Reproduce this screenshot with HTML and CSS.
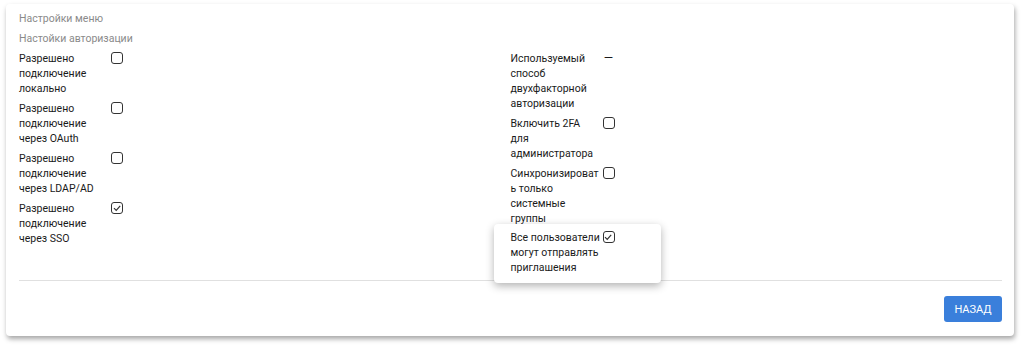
FILE: index.html
```html
<!DOCTYPE html>
<html lang="ru">
<head>
    <meta charset="UTF-8">
    <meta name="viewport" content="width=device-width, initial-scale=1.0">
    <title>Настройки авторизации</title>
    <link rel="stylesheet" href="styles.css">
</head>
<body>
    <div class="card">
        <div class="section-title">Настройки меню</div>
        <div class="section-title">Настойки авторизации</div>

        <div class="settings">
            <div class="column">
                <div class="item">
                    <div class="label">Разрешено подключение локально</div>
                    <span class="check"></span>
                </div>
                <div class="item">
                    <div class="label">Разрешено подключение через OAuth</div>
                    <span class="check"></span>
                </div>
                <div class="item">
                    <div class="label">Разрешено подключение через LDAP/AD</div>
                    <span class="check"></span>
                </div>
                <div class="item">
                    <div class="label">Разрешено подключение через SSO</div>
                    <span class="check checked">
                        <svg viewBox="0 0 12 12" width="12" height="12"><path d="M3 6.2 L5.2 8.4 L9.2 3.8" fill="none" stroke="#333" stroke-width="1.2"/></svg>
                    </span>
                </div>
            </div>
            <div class="column">
                <div class="item">
                    <div class="label">Используемый способ двухфакторной авторизации</div>
                    <span class="value">—</span>
                </div>
                <div class="item">
                    <div class="label">Включить 2FA для администратора</div>
                    <span class="check"></span>
                </div>
                <div class="item">
                    <div class="label">Синхронизировать только системные группы</div>
                    <span class="check"></span>
                </div>
                <div class="item hovered">
                    <div class="label">Все пользователи могут отправлять приглашения</div>
                    <span class="check checked">
                        <svg viewBox="0 0 12 12" width="12" height="12"><path d="M3 6.2 L5.2 8.4 L9.2 3.8" fill="none" stroke="#333" stroke-width="1.2"/></svg>
                    </span>
                </div>
            </div>
        </div>

        <div class="footer">
            <button class="btn">НАЗАД</button>
        </div>
    </div>
</body>
</html>
```

FILE: styles.css
```css
body {
    margin: 0;
    padding: 4px 10px 12px 6px;
    background: #fff;
    font-family: Roboto, "Open Sans", sans-serif;
    font-size: 10.5px;
    color: #1a1a1a;
}
.card {
    background: #fff;
    border-radius: 4px;
    padding: 7px 12px 14px 13px;
    box-shadow: 1px 3px 5px rgba(0, 0, 0, 0.35);
}
.section-title {
    color: #8a8a8a;
    line-height: 16px;
    margin-bottom: 4px;
}
.settings {
    display: grid;
    grid-template-columns: 1fr 1fr;
    margin-top: 2px;
}
.column {
    display: flex;
    flex-direction: column;
    gap: 5px;
}
.item {
    display: flex;
    align-items: flex-start;
    line-height: 15px;
}
.label {
    width: 90px;
    margin-right: 2px;
    overflow-wrap: anywhere;
}
.check {
    flex: none;
    width: 12px;
    height: 12px;
    box-sizing: border-box;
    border: 1.3px solid #333;
    border-radius: 3px;
    margin-top: 1px;
    display: flex;
}
.check svg {
    margin: -1.3px;
}
.value {
    width: 12px;
    font-size: 12px;
    text-align: center;
}
.hovered {
    padding: 6px 17px 8px;
    margin: -7px 0 -8px -17px;
    width: 133px;
    border-radius: 4px;
    box-shadow: 0 3px 8px rgba(0, 0, 0, 0.3);
    background: #fff;
    position: relative;
}
.footer {
    border-top: 1px solid #e0e0e0;
    margin-top: 5px;
    padding-top: 15px;
    display: flex;
    justify-content: flex-end;
}
.btn {
    font-family: inherit;
    font-size: 11px;
    color: #fff;
    background: #3a7fdb;
    border: none;
    border-radius: 3px;
    height: 26px;
    width: 58px;
    padding: 0;
}
```
